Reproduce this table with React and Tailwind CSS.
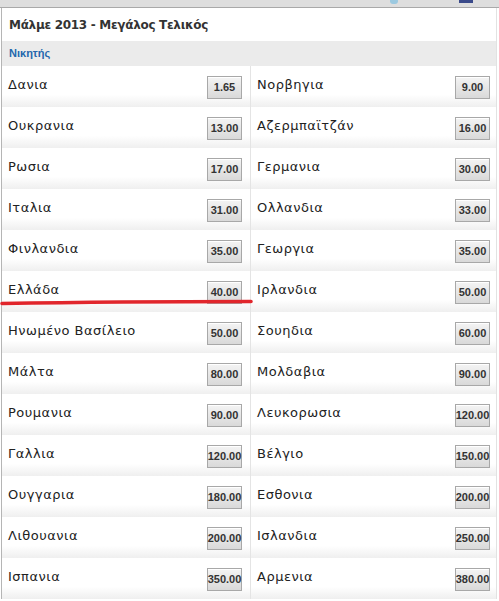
import React from "react";

const rows = [
  ["Δανια", "1.65", "Νορβηγια", "9.00"],
  ["Ουκρανια", "13.00", "Αζερμπαϊτζάν", "16.00"],
  ["Ρωσια", "17.00", "Γερμανια", "30.00"],
  ["Ιταλια", "31.00", "Ολλανδια", "33.00"],
  ["Φινλανδια", "35.00", "Γεωργια", "35.00"],
  ["Ελλάδα", "40.00", "Ιρλανδια", "50.00"],
  ["Ηνωμένο Βασίλειο", "50.00", "Σουηδια", "60.00"],
  ["Μάλτα", "80.00", "Μολδαβια", "90.00"],
  ["Ρουμανια", "90.00", "Λευκορωσια", "120.00"],
  ["Γαλλια", "120.00", "Βέλγιο", "150.00"],
  ["Ουγγαρια", "180.00", "Εσθονια", "200.00"],
  ["Λιθουανια", "200.00", "Ισλανδια", "250.00"],
  ["Ισπανια", "350.00", "Αρμενια", "380.00"],
];

function Odd({ v }) {
  return (
    <div
      className="mt-[10px] h-[23px] w-[35px] flex items-center justify-center border border-[#a8a8a8] bg-gradient-to-b from-[#f4f4f4] to-[#d9d9d9] text-[11px] font-bold text-[#333] shadow-[inset_0_1px_0_#fff] whitespace-nowrap"
      style={{ fontFamily: '"Liberation Sans", Arial, sans-serif' }}
    >
      {v}
    </div>
  );
}

function Cell({ name, odd, className }) {
  return (
    <div className={"flex items-start justify-between pl-[6px] " + className}>
      <span className="pt-[9px] text-[13px] tracking-[0.5px] text-[#222]">{name}</span>
      <Odd v={odd} />
    </div>
  );
}

export default function App() {
  return (
    <div
      className="relative w-[499px] h-[601px] overflow-hidden bg-white"
      style={{ fontFamily: '"DejaVu Sans", Verdana, sans-serif' }}
    >
      <div className="relative h-[8px] bg-[#dedede] border-b border-[#a9a9a9]">
        <div className="absolute left-[390px] -top-[2px] w-[8px] h-[6px] rounded-full bg-[#9cc9e0]" />
        <div className="absolute left-[459px] -top-[2px] w-[14px] h-[5px] bg-[#3a4a8a]" />
      </div>
      <div className="border-l border-[#b5b5b5] ml-[1px] mr-[2px] border-r border-r-[#e2e2e2]">
        <div className="h-[33px] flex items-center pl-[7px] text-[12px] tracking-[-0.3px] font-bold text-[#333]">
          Μάλμε 2013 - Μεγάλος Τελικός
        </div>
        <div
          className="h-[25px] flex items-center pl-[7px] bg-[#ebebeb] text-[11px] font-bold text-[#2467ad]"
          style={{ fontFamily: '"Liberation Sans", Arial, sans-serif' }}
        >
          Νικητής
        </div>
        {rows.map((r, i) => (
          <div
            key={i}
            className="flex h-[41px] bg-gradient-to-b from-white from-70% to-[#efefef]"
          >
            <Cell name={r[0]} odd={r[1]} className="w-[248px] pr-[8px]" />
            <div className="w-[1px] bg-[#e4e4e4]" />
            <Cell name={r[2]} odd={r[3]} className="flex-1 pr-[6px]" />
          </div>
        ))}
      </div>
      <svg
        className="absolute left-0 top-[298px]"
        width="260"
        height="10"
        viewBox="0 0 260 10"
      >
        <path
          d="M2 5.5 C 60 4.5, 150 3.5, 251 3.5"
          stroke="#e1262c"
          strokeWidth="3.6"
          fill="none"
          strokeLinecap="round"
        />
      </svg>
    </div>
  );
}
